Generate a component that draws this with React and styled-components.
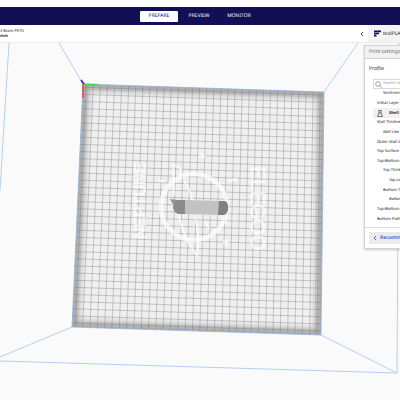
import React, { useState } from 'react';
import styled, { createGlobalStyle } from 'styled-components';

const GlobalStyle = createGlobalStyle`
  * {
    box-sizing: border-box;
  }
  body {
    margin: 0;
    overflow: hidden;
    background: #fafafa;
    font-family: "Noto Sans", "Open Sans", sans-serif;
    text-rendering: geometricPrecision;
  }
  button, input {
    font-family: inherit;
    text-rendering: inherit;
  }
  svg {
    flex-shrink: 0;
  }
`;

const settings = [
  { label: 'Sentiment', level: 1 },
  { label: 'Initial Layer Height', level: 0 },
  { label: 'Shell', category: true },
  { label: 'Wall Thickness', level: 0 },
  { label: 'Wall Line Count', level: 1, italic: true },
  { label: 'Outer Wall Inset', level: 0 },
  { label: 'Top Surface Skin', level: 0 },
  { label: 'Top/Bottom Thickness', level: 0 },
  { label: 'Top Thickness', level: 1 },
  { label: 'Top Layers', level: 2, italic: true },
  { label: 'Bottom Thickness', level: 1 },
  { label: 'Bottom Layers', level: 2, italic: true },
  { label: 'Top/Bottom Pattern', level: 0 },
  { label: 'Bottom Pattern', level: 0 },
];

// corners of the build plate after projection
const plate = { tl: [83, 84], tr: [324, 92], br: [321, 335], bl: [72, 327] };
const CELLS = 34;

const mix = (a, b, t) => [a[0] + (b[0] - a[0]) * t, a[1] + (b[1] - a[1]) * t];

const line = (a, b) => `M${a[0].toFixed(2)} ${a[1].toFixed(2)}L${b[0].toFixed(2)} ${b[1].toFixed(2)}`;

const gridPath = () => {
  const parts = [];
  for (let i = 0; i < CELLS; i++) {
    const t = (i + 0.45) / CELLS;
    parts.push(line(mix(plate.tl, plate.tr, t), mix(plate.bl, plate.br, t)));
    parts.push(line(mix(plate.tl, plate.bl, t), mix(plate.tr, plate.br, t)));
  }
  return parts.join('');
};

const outline = 'M83 84L324 92L321 335L72 327Z';

const BuildPlate = () => (
  <Scene viewBox="0 43 400 357" preserveAspectRatio="xMidYMin slice" aria-label="Build plate">
    <defs>
      <clipPath id="plate">
        <path d={outline} />
      </clipPath>
      <filter id="soft" x="-10%" y="-10%" width="120%" height="120%">
        <feGaussianBlur stdDeviation="3" />
      </filter>
    </defs>
    <g fill="none" stroke="#b4cff0" strokeWidth="1">
      <path d="M59 43L83 84M358 43L324 92M9 43L0 191M72 327L0 357M0 361L397 373L321 335M397 373L399 43" />
    </g>
    <path d={outline} fill="#efefef" />
    <g clipPath="url(#plate)">
      <path d={outline} fill="none" stroke="#a6a6a6" strokeWidth="11" filter="url(#soft)" />
      <path d={gridPath()} stroke="#707070" strokeOpacity="0.48" strokeWidth="0.7" />
      <path d="M88 84L77 327M318 92L315 335M72 322L321 330M83 89L324 97" stroke="#777" strokeOpacity="0.2" strokeWidth="0.7" />
    </g>
    <g fill="none" stroke="#fff" strokeOpacity="0.7">
      <circle cx="194" cy="207" r="33" strokeWidth="4.500" />
      <path d="M174 195L173 164L181 169L180 177M184 181Q191 191 192 200M179 215Q182 231 190 245L197 256L198 246M195 212L198 235L198 246" strokeWidth="2" />
      <path d="M202 153v6M199 156h6M159 181h5M228 181l9-2M226 240v6M223 242h6M205 222l4 6" strokeWidth="2.500" />
    </g>
    <PlateText $size={20} transform="translate(251 166) rotate(90)">ELEGOO</PlateText>
    <PlateText $size={16} transform="translate(145 239) rotate(-90)">NEPTUNE</PlateText>
    <g>
      <path d="M170 199L178 200L176 204H173Z" fill="#929292" />
      <path d="M176 200H185V214H178Q173 212 173 206Z" fill="#8b8b8b" />
      <path d="M218 201H225Q229 203 228 210Q227 214 224 215H218Z" fill="#818181" />
      <path d="M185 200L219 201L218 215L185 214Z" fill="#c2c2c2" />
    </g>
    <path d={outline} fill="none" stroke="#92b5e0" strokeWidth="0.8" />
    <g fill="none" strokeWidth="1.5">
      <path d="M83 84V98" stroke="#f04040" />
      <path d="M83 84.300L98 84.800" stroke="#45d745" />
      <path d="M81 80L84 84" stroke="#2020d8" />
    </g>
  </Scene>
);

const SearchIcon = () => (
  <svg width="7" height="7" viewBox="0 0 7 7" fill="none" stroke="#777" strokeWidth="0.7">
    <circle cx="3" cy="3" r="2.300" />
    <path d="M4.700 4.700L6.700 6.700" />
  </svg>
);

const ShellIcon = () => (
  <svg width="6" height="7" viewBox="0 0 6 7" fill="none" stroke="#444" strokeWidth="0.7">
    <path d="M1.500 0.500H4.500M2 0.500V3L0.500 6.500H5.500L4 3V0.500M2 3H4" />
  </svg>
);

const Chevron = ({ color }) => (
  <svg width="4" height="6" viewBox="0 0 4 6" fill="none" stroke={color} strokeWidth="0.9">
    <path d="M3 1L1 3L3 5" />
  </svg>
);

const MaterialIcon = () => (
  <svg width="7" height="7" viewBox="0 0 7 7" fill="#14104f">
    <path d="M0 0.500H7V2.200H0ZM0 2.700H5V4.300H0ZM0 4.800H2.500V6.500H0Z" />
  </svg>
);

const App = () => {
  const [stage, setStage] = useState('PREPARE');
  const [query, setQuery] = useState('');

  return (
    <Page>
      <GlobalStyle />
      <Nav>
        {['PREPARE', 'PREVIEW', 'MONITOR'].map((name) => (
          <StageButton key={name} $active={stage === name} onClick={() => setStage(name)}>
            {name}
          </StageButton>
        ))}
      </Nav>
      <ConfigBar>
        <Machine>
          <span>4 Black PETG</span>
          <strong>mm</strong>
        </Machine>
        <CollapseButton aria-label="Collapse">
          <Chevron color="#333" />
        </CollapseButton>
        <Material>
          <MaterialIcon />
          tealPLA
        </Material>
      </ConfigBar>
      <Workspace>
        <BuildPlate />
        <Panel>
          <PanelHeader>Print settings</PanelHeader>
          <PanelTitle>Profile</PanelTitle>
          <SearchBox>
            <SearchIcon />
            <SearchInput
              aria-label="Search settings"
              placeholder="Search settings"
              value={query}
              onChange={(e) => setQuery(e.target.value)}
            />
          </SearchBox>
          <SettingList>
            {settings.map((item) =>
              item.category ? (
                <Category key={item.label}>
                  <ShellIcon />
                  {item.label}
                </Category>
              ) : (
                <Setting key={item.label} $level={item.level} $italic={item.italic}>
                  {item.label}
                </Setting>
              )
            )}
          </SettingList>
          <PanelFooter>
            <RecommendedButton>
              <Chevron color="#2c62c4" />
              Recommended
            </RecommendedButton>
          </PanelFooter>
        </Panel>
      </Workspace>
    </Page>
  );
};

const Page = styled.div`
  display: flex;
  flex-direction: column;
  min-height: 100vh;
  padding-top: 7px;
  background: #fdfdfd;
`;

const Nav = styled.nav`
  display: flex;
  justify-content: center;
  align-items: center;
  gap: 2px;
  height: 18px;
  padding-right: 2px;
  background: #130f54;
`;

const StageButton = styled.button`
  width: 38px;
  height: 11px;
  padding: 0;
  border: none;
  border-radius: 1px;
  background: ${(props) => (props.$active ? '#fff' : 'transparent')};
  color: ${(props) => (props.$active ? '#130f54' : '#fff')};
  font-size: 5px;
  line-height: 11px;
  cursor: pointer;
`;

const ConfigBar = styled.header`
  display: flex;
  height: 18px;
  background: #fff;
  border-bottom: 1px solid #ececec;
`;

const Machine = styled.div`
  display: flex;
  flex: 1;
  flex-direction: column;
  justify-content: center;
  color: #333;
  font-size: 4px;
  line-height: 5px;
  white-space: nowrap;
`;

const CollapseButton = styled.button`
  display: flex;
  align-items: center;
  justify-content: center;
  width: 12px;
  padding: 0;
  border: none;
  background: none;
`;

const Material = styled.div`
  display: flex;
  align-items: center;
  gap: 2px;
  width: 32px;
  padding-left: 6px;
  overflow: hidden;
  background: #f3f3f3;
  color: #222;
  font-size: 5px;
  white-space: nowrap;
`;

const Workspace = styled.main`
  position: relative;
  display: flex;
  flex: 1;
  justify-content: flex-end;
  align-items: flex-start;
  overflow: hidden;
  background: #fafafa;
`;

const Scene = styled.svg`
  position: absolute;
  inset: 0;
  width: 100%;
  height: 100%;
`;

const PlateText = styled.text`
  fill: #fff;
  fill-opacity: 0.55;
  stroke: #fff;
  stroke-opacity: 0.5;
  font-family: "Liberation Sans", sans-serif;
  font-size: ${(props) => props.$size}px;
`;

const Panel = styled.aside`
  position: relative;
  width: 36px;
  margin-top: 2px;
  overflow: hidden;
  border: 1px solid #d4d4d4;
  border-right: none;
  background: #fff;
  box-shadow: 0 1px 2px rgba(0, 0, 0, 0.2);
  color: #222;
  white-space: nowrap;
`;

const PanelHeader = styled.div`
  height: 13px;
  padding-left: 4px;
  border-bottom: 1px solid #d4d4d4;
  background: #f1f1f1;
  color: #666;
  font-size: 5px;
  line-height: 12px;
`;

const PanelTitle = styled.h2`
  margin: 6px 0 5px;
  padding-left: 4px;
  font-size: 5px;
  font-weight: 400;
  line-height: 9px;
`;

const SearchBox = styled.label`
  display: flex;
  align-items: center;
  gap: 1px;
  height: 10px;
  margin-left: 8px;
  padding-left: 1px;
  border: 1px solid #d9d9d9;
  border-right: none;
`;

const SearchInput = styled.input`
  flex: 1;
  min-width: 0;
  padding: 0;
  border: none;
  outline: none;
  font-size: 4px;
  line-height: 8px;
  &::placeholder {
    color: #999;
  }
`;

const SettingList = styled.ul`
  display: grid;
  grid-template-rows: repeat(14, 1fr);
  height: 135px;
  margin: 0;
  padding: 0;
  list-style: none;
`;

const Setting = styled.li`
  display: flex;
  align-items: center;
  padding-left: ${(props) => 12 + props.$level * 6}px;
  font-size: 4px;
  font-style: ${(props) => (props.$italic ? 'italic' : 'normal')};
  line-height: 9px;
`;

const Category = styled.li`
  display: flex;
  align-items: center;
  gap: 6px;
  margin-left: 8px;
  padding-left: 4px;
  background: #f0f0f0;
  font-size: 4px;
  font-weight: 700;
  line-height: 9px;
`;

const PanelFooter = styled.div`
  margin-top: 3px;
  padding: 4px 0 4px 4px;
  border-top: 1px solid #dcdcdc;
`;

const RecommendedButton = styled.button`
  display: flex;
  align-items: center;
  gap: 3px;
  width: 100%;
  height: 12px;
  padding: 0 0 0 4px;
  overflow: hidden;
  border: none;
  background: #ebebed;
  color: #2c62c4;
  font-size: 5px;
  font-weight: 600;
`;

export default App;
